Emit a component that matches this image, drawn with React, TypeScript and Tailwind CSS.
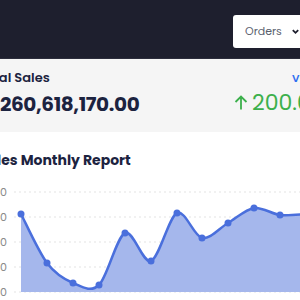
import React from 'react';

const points: [number, number][] = [
    [21, 34], [47, 83], [73, 103], [99, 105], [125, 53], [151, 81],
    [177, 33], [202, 58], [228, 43], [254, 28], [280, 35], [306, 34],
];

// catmull-rom -> bezier, low tension so the dips stay above zero
const buildPath = (pts: [number, number][]) => {
    let d = `M${pts[0][0]},${pts[0][1]}`;
    for (let i = 0; i < pts.length - 1; i++) {
        const p0 = pts[i - 1] || pts[i];
        const p1 = pts[i];
        const p2 = pts[i + 1];
        const p3 = pts[i + 2] || p2;
        const t = 0.16;
        const c1x = p1[0] + (p2[0] - p0[0]) * t;
        const c1y = p1[1] + (p2[1] - p0[1]) * t;
        const c2x = p2[0] - (p3[0] - p1[0]) * t;
        const c2y = p2[1] - (p3[1] - p1[1]) * t;
        d += ` C${c1x},${c1y} ${c2x},${c2y} ${p2[0]},${p2[1]}`;
    }
    return d;
};

const SalesChart: React.FC = () => {
    const line = buildPath(points);
    const area = `${line} L306,112 L21,112 Z`;
    const grid = [
        { label: '80', y: 12 },
        { label: '60', y: 37 },
        { label: '40', y: 62 },
        { label: '20', y: 87 },
        { label: '0', y: 112 },
    ];
    return (
        <svg width="300" height="120" viewBox="0 0 300 120" className="block">
            {grid.map((g) => (
                <g key={g.label}>
                    <line x1="14" x2="300" y1={g.y} y2={g.y} stroke="#e3e3e3" strokeWidth="1" strokeDasharray="2 3" />
                    <text x="7" y={g.y + 4} textAnchor="end" fontSize="11" fill="#8a8a8a" fontFamily="Inter, sans-serif">{g.label}</text>
                </g>
            ))}
            <path d={area} fill="#a5b7ec" />
            <path d={line} fill="none" stroke="#4a6fdc" strokeWidth="2.5" />
            {points.map(([x, y], i) => (
                <circle key={i} cx={x} cy={y} r="3.5" fill="#4a6fdc" />
            ))}
        </svg>
    );
};

const App: React.FC = () => {
    return (
        <div className="w-[300px] h-[300px] overflow-hidden bg-white" style={{ fontFamily: 'Poppins, Inter, sans-serif' }}>
            <div className="h-[59px] bg-[#1e1f2e] border-b border-[#2c2d3c] flex items-center justify-end">
                <button className="w-[80px] h-[33px] -mr-[13px] mt-[4px] bg-white rounded-[3px] flex items-center pl-[12px] gap-[9px] text-[11px] text-[#5a5f6e] whitespace-nowrap">
                    Orders
                    <svg width="9" height="9" viewBox="0 0 10 10" className="mt-[1px] shrink-0">
                        <path d="M2 3.5 L5 6.5 L8 3.5" fill="none" stroke="#1e1f2e" strokeWidth="2" />
                    </svg>
                </button>
            </div>

            <div className="h-[73px] bg-[#f5f5f5] flex pt-[9px]">
                <div className="-ml-[22px] flex flex-col gap-[6px] shrink-0">
                    <span className="text-[13px] font-semibold text-[#1c2340]">Total Sales</span>
                    <span className="ml-[22px] text-[20px] font-bold tracking-[-0.4px] leading-none text-[#1c2340]">260,618,170.00</span>
                </div>
                <div className="ml-auto w-[66px] shrink-0 flex flex-col gap-[4px] whitespace-nowrap">
                    <span className="pl-[58px] text-[13px] font-medium text-[#2f6ff0]">view</span>
                    <span className="text-[22px] leading-none text-[#3cb04c] flex items-center gap-[4px]">
                        <svg width="14" height="15" viewBox="0 0 14 15" className="shrink-0">
                            <path d="M7 14.5 V1.5 M1.5 7 L7 1.5 L12.5 7" fill="none" stroke="#3cb04c" strokeWidth="1.8" />
                        </svg>
                        200.00%
                    </span>
                </div>
            </div>

            <div className="pt-[21px]">
                <h3 className="-ml-[21px] text-[14px] font-bold text-[#1c2340] leading-none">Sales Monthly Report</h3>
                <div className="mt-[13px]">
                    <SalesChart />
                </div>
            </div>
        </div>
    );
};

export default App;
